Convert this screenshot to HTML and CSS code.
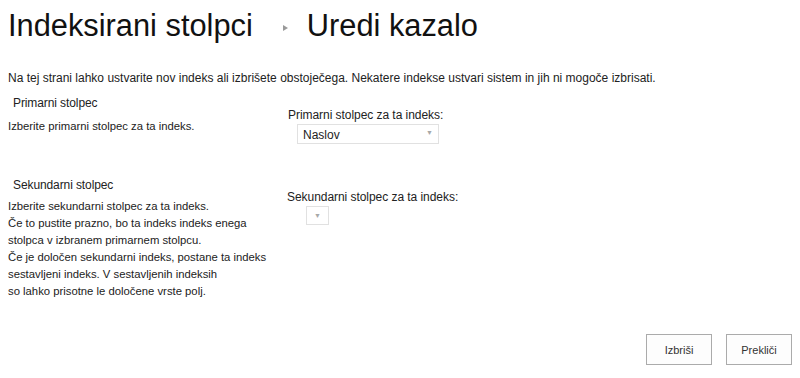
FILE: index.html
```html
<!DOCTYPE html>
<html lang="sl">
<head>
    <meta charset="UTF-8">
    <title>Uredi kazalo</title>
    <link rel="stylesheet" href="styles.css">
</head>
<body>
    <div class="page">
        <h1 class="title">
            <span>Indeksirani stolpci</span>
            <span class="sep"></span>
            <span>Uredi kazalo</span>
        </h1>

        <p class="intro">Na tej strani lahko ustvarite nov indeks ali izbrišete obstoječega. Nekatere indekse ustvari sistem in jih ni mogoče izbrisati.</p>

        <div class="section first">
            <div class="side">
                <h3 class="side-title">Primarni stolpec</h3>
                <p class="side-text">Izberite primarni stolpec za ta indeks.</p>
            </div>
            <div class="field">
                <label class="field-label">Primarni stolpec za ta indeks:</label>
                <div class="select wide">
                    <span>Naslov</span>
                    <span class="arrow">&#9660;</span>
                </div>
            </div>
        </div>

        <div class="section second">
            <div class="side">
                <h3 class="side-title">Sekundarni stolpec</h3>
                <p class="side-text">Izberite sekundarni stolpec za ta indeks.<br>
                Če to pustite prazno, bo ta indeks indeks enega<br>
                stolpca v izbranem primarnem stolpcu.<br>
                Če je določen sekundarni indeks, postane ta indeks<br>
                sestavljeni indeks. V sestavljenih indeksih<br>
                so lahko prisotne le določene vrste polj.</p>
            </div>
            <div class="field">
                <label class="field-label">Sekundarni stolpec za ta indeks:</label>
                <div class="select small">
                    <span class="arrow">&#9660;</span>
                </div>
            </div>
        </div>

        <div class="buttons">
            <button class="btn">Izbriši</button>
            <button class="btn">Prekliči</button>
        </div>
    </div>
</body>
</html>
```

FILE: styles.css
```css
* {
    margin: 0;
    padding: 0;
    box-sizing: border-box;
}
body {
    background: #fff;
    font-family: "Liberation Sans", Arial, sans-serif;
    color: #222;
}
.page {
    width: 800px;
    height: 378px;
    padding: 8px 8px 0 8px;
    display: flex;
    flex-direction: column;
}
.title {
    font-weight: normal;
    font-size: 30.8px;
    line-height: 36px;
    color: #111;
    display: flex;
    align-items: center;
}
.sep {
    width: 0;
    height: 0;
    border-left: 5px solid #9a9a9a;
    border-top: 3px solid transparent;
    border-bottom: 3px solid transparent;
    margin: 3px 19px 0 30px;
}
.intro {
    font-size: 12px;
    line-height: 16px;
    margin-top: 26px;
}
.section {
    display: flex;
}
.section.first {
    margin-top: 1px;
    height: 82px;
}
.side {
    width: 280px;
}
.side-title {
    font-weight: normal;
    font-size: 12px;
    line-height: 16px;
    padding-left: 5px;
    margin-top: 8px;
    letter-spacing: -0.1px;
}
.side-text {
    font-size: 11.3px;
    line-height: 17px;
}
.first .side-text {
    margin-top: 7px;
}
.second .side-text {
    margin-top: 5px;
}
.field {
    display: flex;
    flex-direction: column;
    align-items: flex-start;
}
.field-label {
    font-size: 12px;
    line-height: 16px;
    letter-spacing: -0.05px;
}
.first .field {
    margin-top: 20px;
}
.second .field {
    margin-top: 20px;
    margin-left: -1px;
}
.select {
    border: 1px solid #e1e1e1;
    background: #fff;
    display: flex;
    align-items: center;
    justify-content: space-between;
    font-size: 12px;
}
.select.wide {
    width: 142px;
    height: 20px;
    margin: 1px 0 0 9px;
    padding: 2px 5px 0 5px;
}
.select.small {
    width: 23px;
    height: 19px;
    margin: 1px 0 0 19px;
    justify-content: center;
}
.arrow {
    font-size: 7px;
    color: #a8a8a8;
}
.wide .arrow {
    margin-top: -6px;
}
.buttons {
    margin-top: auto;
    margin-bottom: 13px;
    display: flex;
    justify-content: flex-end;
    gap: 14px;
}
.btn {
    font-family: "Liberation Sans", Arial, sans-serif;
    font-size: 11px;
    color: #333;
    width: 66px;
    height: 31px;
    border: 1px solid #ababab;
    background: #fdfdfd;
}
```
